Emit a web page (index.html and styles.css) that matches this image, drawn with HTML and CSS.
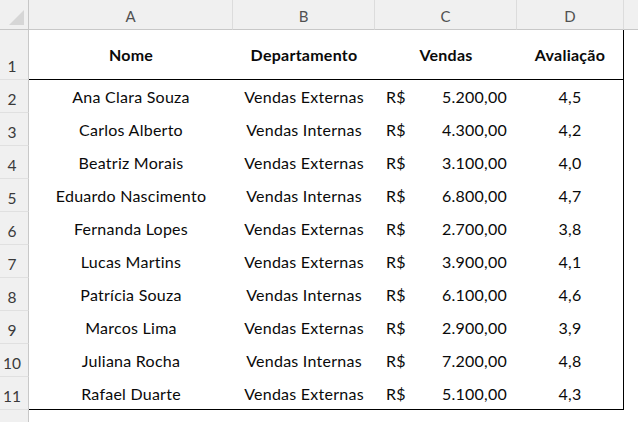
FILE: index.html
```html
<!DOCTYPE html>
<html lang="pt-BR">
<head>
<meta charset="utf-8">
<title>Planilha</title>
<link rel="stylesheet" href="styles.css">
</head>
<body>
<div class="sheet">
  <div class="corner"><span class="tri"></span></div>
  <div class="colhdr">A</div>
  <div class="colhdr">B</div>
  <div class="colhdr">C</div>
  <div class="colhdr">D</div>
  <div class="colhdr last"></div>

  <div class="rowhdr r1">1</div>
  <div class="cell head r1">Nome</div>
  <div class="cell head r1">Departamento</div>
  <div class="cell head r1">Vendas</div>
  <div class="cell head r1 colD">Avaliação</div>
  <div class="cell empty r1"></div>

  <div class="rowhdr">2</div>
  <div class="cell">Ana Clara Souza</div>
  <div class="cell">Vendas Externas</div>
  <div class="cell money"><span>R$</span><span>5.200,00</span></div>
  <div class="cell colD">4,5</div>
  <div class="cell empty"></div>

  <div class="rowhdr">3</div>
  <div class="cell">Carlos Alberto</div>
  <div class="cell">Vendas Internas</div>
  <div class="cell money"><span>R$</span><span>4.300,00</span></div>
  <div class="cell colD">4,2</div>
  <div class="cell empty"></div>

  <div class="rowhdr">4</div>
  <div class="cell">Beatriz Morais</div>
  <div class="cell">Vendas Externas</div>
  <div class="cell money"><span>R$</span><span>3.100,00</span></div>
  <div class="cell colD">4,0</div>
  <div class="cell empty"></div>

  <div class="rowhdr">5</div>
  <div class="cell">Eduardo Nascimento</div>
  <div class="cell">Vendas Internas</div>
  <div class="cell money"><span>R$</span><span>6.800,00</span></div>
  <div class="cell colD">4,7</div>
  <div class="cell empty"></div>

  <div class="rowhdr">6</div>
  <div class="cell">Fernanda Lopes</div>
  <div class="cell">Vendas Externas</div>
  <div class="cell money"><span>R$</span><span>2.700,00</span></div>
  <div class="cell colD">3,8</div>
  <div class="cell empty"></div>

  <div class="rowhdr">7</div>
  <div class="cell">Lucas Martins</div>
  <div class="cell">Vendas Externas</div>
  <div class="cell money"><span>R$</span><span>3.900,00</span></div>
  <div class="cell colD">4,1</div>
  <div class="cell empty"></div>

  <div class="rowhdr">8</div>
  <div class="cell">Patrícia Souza</div>
  <div class="cell">Vendas Internas</div>
  <div class="cell money"><span>R$</span><span>6.100,00</span></div>
  <div class="cell colD">4,6</div>
  <div class="cell empty"></div>

  <div class="rowhdr">9</div>
  <div class="cell">Marcos Lima</div>
  <div class="cell">Vendas Externas</div>
  <div class="cell money"><span>R$</span><span>2.900,00</span></div>
  <div class="cell colD">3,9</div>
  <div class="cell empty"></div>

  <div class="rowhdr">10</div>
  <div class="cell">Juliana Rocha</div>
  <div class="cell">Vendas Internas</div>
  <div class="cell money"><span>R$</span><span>7.200,00</span></div>
  <div class="cell colD">4,8</div>
  <div class="cell empty"></div>

  <div class="rowhdr">11</div>
  <div class="cell lastrow">Rafael Duarte</div>
  <div class="cell lastrow">Vendas Externas</div>
  <div class="cell money lastrow"><span>R$</span><span>5.100,00</span></div>
  <div class="cell colD lastrow">4,3</div>
  <div class="cell empty"></div>

  <div class="rowhdr">12</div>
  <div class="cell blank"></div>
  <div class="cell blank"></div>
  <div class="cell blank"></div>
  <div class="cell blank"></div>
  <div class="cell empty"></div>
</div>
</body>
</html>
```

FILE: styles.css
```css
* { box-sizing: border-box; }

html, body {
  margin: 0;
  padding: 0;
  background: #ffffff;
  overflow: hidden;
}

.sheet {
  display: grid;
  grid-template-columns: 29px 204px 142px 142px 107px 1fr;
  grid-template-rows: 30px 50px repeat(10, 33px) 33px;
  width: 638px;
  height: 422px;
  overflow: hidden;
  font-family: Lato, "Liberation Sans", sans-serif;
  font-size: 16px;
  letter-spacing: 0.25px;
  color: #0a0a0a;
}

.corner {
  background: #f0f0f0;
  border-right: 1px solid #c6c6c6;
  border-bottom: 1px solid #c6c6c6;
  position: relative;
}

.tri {
  position: absolute;
  right: 4px;
  bottom: 4px;
  width: 0;
  height: 0;
  border-left: 15px solid transparent;
  border-bottom: 15px solid #d6d6d6;
}

.colhdr {
  background: #f0f0f0;
  border-bottom: 1px solid #c8c8c8;
  border-right: 1px solid #dcdcdc;
  display: flex;
  align-items: flex-end;
  justify-content: center;
  padding-bottom: 4px;
  font-size: 15px;
  letter-spacing: 0;
  color: #505050;
}

.colhdr.last { border-right: none; }

.rowhdr {
  background: #f0f0f0;
  border-right: 1px solid #c8c8c8;
  border-bottom: 1px solid #e0e0e0;
  display: flex;
  align-items: flex-end;
  justify-content: center;
  padding: 0 4px 4px 0;
  font-size: 15.5px;
  letter-spacing: 0;
  color: #3a3a3a;
}

.cell {
  display: flex;
  align-items: center;
  justify-content: center;
  white-space: nowrap;
}

.head {
  font-weight: 700;
  border-bottom: 1px solid #000;
}

.colD { border-right: 1px solid #000; }

.lastrow { border-bottom: 1px solid #000; }

.money {
  justify-content: space-between;
  padding: 0 10px 0 11px;
}

.empty { background: #fff; }
```
